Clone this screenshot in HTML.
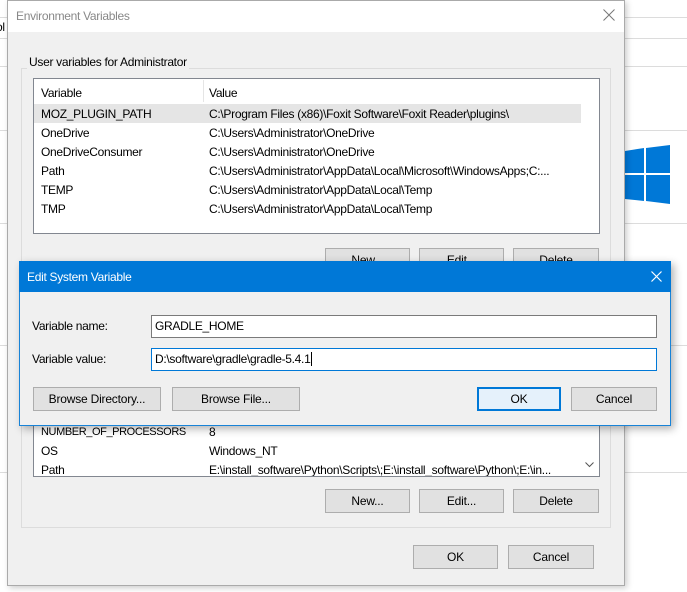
<!DOCTYPE html>
<html><head><meta charset="utf-8"><style>
*{box-sizing:border-box;margin:0;padding:0}
body{width:687px;height:592px;overflow:hidden;background:#fff;position:relative;font-family:"Liberation Sans",sans-serif;font-size:12px;color:#000}
.a{position:absolute}
.hl{position:absolute;left:0;width:687px;height:1px;background:#dcdcdc}
.btn{position:absolute;height:24px;background:#e1e1e1;border:1px solid #adadad;text-align:center;line-height:22px;font-size:12px;letter-spacing:-0.2px}
.t{position:absolute;white-space:nowrap;font-size:12px;line-height:14px;letter-spacing:-0.3px}
</style></head><body>
<div class="hl" style="top:17px"></div>
<div class="hl" style="top:38px"></div>
<div class="hl" style="top:66px"></div>
<div class="hl" style="top:130px"></div>
<div class="hl" style="top:223px"></div>
<div class="hl" style="top:345px"></div>
<div class="hl" style="top:472px"></div>
<div class="t" style="left:-4px;top:20px">ol</div>
<svg class="a" style="left:625px;top:145px" width="46" height="60"><polygon points="0,6 19,3 19,28 0,28" fill="#0078d7"/><polygon points="21,3 45,0 45,28 21,28" fill="#0078d7"/><polygon points="0,30 19,30 19,56 0,54" fill="#0078d7"/><polygon points="21,30 45,30 45,59 21,56" fill="#0078d7"/></svg>

<div class="a" style="left:7px;top:0;width:618px;height:586px;background:#f0f0f0;border:1px solid #aaa;box-shadow:2px 2px 6px rgba(0,0,0,.2)"></div>
<div class="a" style="left:8px;top:1px;width:616px;height:31px;background:#fff"></div>
<div class="t" style="left:16px;top:9px;color:#888">Environment Variables</div>
<svg class="a" style="left:603px;top:9px" width="12" height="12"><path d="M0.5 0.5L11.5 11.5M11.5 0.5L0.5 11.5" stroke="#777" stroke-width="1"/></svg>
<div class="a" style="left:21px;top:68px;width:590px;height:460px;border:1px solid #dcdcdc"></div>
<div class="t" style="left:27px;top:55px;background:#f0f0f0;padding:0 2px">User variables for Administrator</div>
<div class="a" style="left:33px;top:78px;width:567px;height:156px;background:#fff;border:1px solid #828790"></div>
<div class="a" style="left:203px;top:80px;width:1px;height:22px;background:#e5e5e5"></div>
<div class="a" style="left:34px;top:104px;width:547px;height:19px;background:#e5e5e5"></div>
<div class="t" style="left:41px;top:86px">Variable</div><div class="t" style="left:209px;top:86px">Value</div>
<div class="t" style="left:41px;top:107px">MOZ_PLUGIN_PATH</div><div class="t" style="left:209px;top:107px">C:\Program Files (x86)\Foxit Software\Foxit Reader\plugins\</div>
<div class="t" style="left:41px;top:126px">OneDrive</div><div class="t" style="left:209px;top:126px">C:\Users\Administrator\OneDrive</div>
<div class="t" style="left:41px;top:145px">OneDriveConsumer</div><div class="t" style="left:209px;top:145px">C:\Users\Administrator\OneDrive</div>
<div class="t" style="left:41px;top:164px">Path</div><div class="t" style="left:209px;top:164px">C:\Users\Administrator\AppData\Local\Microsoft\WindowsApps;C:...</div>
<div class="t" style="left:41px;top:183px">TEMP</div><div class="t" style="left:209px;top:183px">C:\Users\Administrator\AppData\Local\Temp</div>
<div class="t" style="left:41px;top:202px">TMP</div><div class="t" style="left:209px;top:202px">C:\Users\Administrator\AppData\Local\Temp</div>
<div class="btn" style="left:325px;top:248px;width:85px">New...</div>
<div class="btn" style="left:419px;top:248px;width:85px">Edit...</div>
<div class="btn" style="left:513px;top:248px;width:86px">Delete</div>

<div class="a" style="left:33px;top:410px;width:567px;height:67px;background:#fff;border:1px solid #828790;border-top:none"></div>
<div class="t" style="left:41px;top:425px;font-size:11px;letter-spacing:-0.4px">NUMBER_OF_PROCESSORS</div><div class="t" style="left:209px;top:425px">8</div>
<div class="t" style="left:41px;top:444px">OS</div><div class="t" style="left:209px;top:444px">Windows_NT</div>
<div class="a" style="left:34px;top:460px;width:548px;height:16px;overflow:hidden"><div class="t" style="left:7px;top:3px">Path</div><div class="t" style="left:175px;top:3px">E:\install_software\Python\Scripts\;E:\install_software\Python\;E:\in...</div></div>
<svg class="a" style="left:585px;top:462px" width="9" height="6"><path d="M0.5 0.5L4.5 4.5L8.5 0.5" stroke="#555" fill="none"/></svg>
<div class="btn" style="left:325px;top:489px;width:85px">New...</div>
<div class="btn" style="left:419px;top:489px;width:85px">Edit...</div>
<div class="btn" style="left:513px;top:489px;width:86px">Delete</div>
<div class="btn" style="left:413px;top:545px;width:85px">OK</div>
<div class="btn" style="left:508px;top:545px;width:86px">Cancel</div>

<div class="a" style="left:19px;top:261px;width:652px;height:165px;background:#f0f0f0;border:1px solid #1883d7;box-shadow:3px 3px 8px rgba(0,0,0,.3)"></div>
<div class="a" style="left:19px;top:261px;width:652px;height:31px;background:#0078d7"></div>
<div class="t" style="left:27px;top:270px;color:#fff">Edit System Variable</div>
<svg class="a" style="left:651px;top:271px" width="11" height="11"><path d="M0.5 0.5L10.5 10.5M10.5 0.5L0.5 10.5" stroke="#fff" stroke-width="1.2"/></svg>
<div class="t" style="left:32px;top:319px">Variable name:</div>
<div class="t" style="left:32px;top:352px">Variable value:</div>
<div class="a" style="left:151px;top:315px;width:506px;height:23px;background:#fff;border:1px solid #7a7a7a"></div>
<div class="t" style="left:155px;top:319px">GRADLE_HOME</div>
<div class="a" style="left:151px;top:348px;width:506px;height:23px;background:#fff;border:1px solid #0078d7"></div>
<div class="t" style="left:155px;top:352px">D:\software\gradle\gradle-5.4.1<span style="border-left:1px solid #000;margin-left:1px"></span></div>
<div class="btn" style="left:33px;top:387px;width:128px">Browse Directory...</div>
<div class="btn" style="left:172px;top:387px;width:128px">Browse File...</div>
<div class="btn" style="left:477px;top:387px;width:84px;background:#e5f1fb;border:2px solid #0078d7;line-height:20px">OK</div>
<div class="btn" style="left:571px;top:387px;width:86px">Cancel</div>
</body></html>
